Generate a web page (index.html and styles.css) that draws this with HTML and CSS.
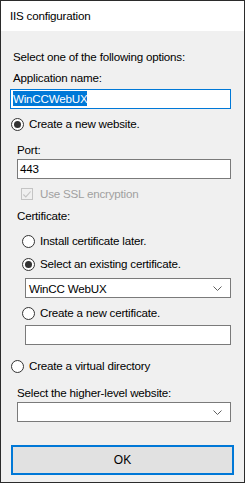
FILE: index.html
```html
<!DOCTYPE html>
<html lang="en">
<head>
    <meta charset="UTF-8">
    <title>IIS configuration</title>
    <link rel="stylesheet" href="styles.css">
</head>
<body>
    <div class="window">
        <div class="titlebar">IIS configuration</div>

        <div class="content">
            <div class="label intro">Select one of the following options:</div>
            <div class="label app-label">Application name:</div>
            <div class="textbox focused app-input"><span class="selected-text">WinCCWebUX</span></div>

            <div class="option new-site">
                <span class="radio checked"></span>
                <span>Create a new website.</span>
            </div>

            <div class="group site-group">
                <div class="label port-label">Port:</div>
                <div class="textbox port-input">443</div>

                <div class="option disabled ssl">
                    <span class="checkbox">
                        <svg width="11" height="11" viewBox="0 0 11 11"><path d="M1.5 5.5 L4.2 8.2 L9.5 2.2" fill="none" stroke="#c4c4c4" stroke-width="1.2"/></svg>
                    </span>
                    <span>Use SSL encryption</span>
                </div>

                <div class="label cert-label">Certificate:</div>

                <div class="cert-group">
                    <div class="option cert-later">
                        <span class="radio"></span>
                        <span>Install certificate later.</span>
                    </div>
                    <div class="option cert-existing">
                        <span class="radio checked"></span>
                        <span>Select an existing certificate.</span>
                    </div>
                    <div class="combo cert-combo">
                        <span>WinCC WebUX</span>
                        <svg class="chevron" width="9" height="5" viewBox="0 0 9 5"><path d="M0.5 0.5 L4.5 4.5 L8.5 0.5" fill="none" stroke="#606060" stroke-width="1"/></svg>
                    </div>
                    <div class="option cert-new">
                        <span class="radio"></span>
                        <span>Create a new certificate.</span>
                    </div>
                    <div class="textbox cert-input"></div>
                </div>
            </div>

            <div class="option virtual-dir">
                <span class="radio"></span>
                <span>Create a virtual directory</span>
            </div>

            <div class="group">
                <div class="label parent-label">Select the higher-level website:</div>
                <div class="combo parent-combo">
                    <span></span>
                    <svg class="chevron" width="9" height="5" viewBox="0 0 9 5"><path d="M0.5 0.5 L4.5 4.5 L8.5 0.5" fill="none" stroke="#606060" stroke-width="1"/></svg>
                </div>
            </div>
        </div>

        <div class="footer">
            <button class="ok">OK</button>
        </div>
    </div>
</body>
</html>
```

FILE: styles.css
```css
body {
    margin: 0;
    font-family: "Liberation Sans", Arial, sans-serif;
    font-size: 11.6px;
    letter-spacing: -0.2px;
    color: #000;
    background: #f0f0f0;
}
.window {
    width: 245px;
    height: 483px;
    box-sizing: border-box;
    border: 1px solid #2b2b2b;
    background: #f0f0f0;
    display: flex;
    flex-direction: column;
}
.titlebar {
    height: 30px;
    line-height: 30px;
    padding-left: 9px;
    background: #fff;
}
.content {
    display: flex;
    flex-direction: column;
    padding: 0 13px 0 9px;
}
.label {
    line-height: 16px;
    height: 16px;
    padding-left: 3px;
}
.intro { margin-top: 18px; }
.app-label { margin-top: 5px; }
.textbox {
    height: 20px;
    box-sizing: border-box;
    border: 1px solid #7a7a7a;
    background: #fff;
    line-height: 18px;
    padding-left: 2px;
}
.textbox.focused {
    border-color: #0078d7;
}
.app-input { margin-top: 3px; }
.selected-text {
    background: #0078d7;
    color: #fff;
    padding: 1px 0;
}
.option {
    display: flex;
    align-items: center;
    gap: 5px;
    height: 16px;
    line-height: 16px;
    padding-left: 1px;
}
.option.disabled {
    color: #a0a0a0;
}
.radio {
    width: 13px;
    height: 13px;
    box-sizing: border-box;
    border: 1px solid #333;
    border-radius: 50%;
    background: #fff;
    display: flex;
    align-items: center;
    justify-content: center;
    flex-shrink: 0;
}
.radio.checked::after {
    content: "";
    width: 7px;
    height: 7px;
    border-radius: 50%;
    background: #333;
}
.checkbox {
    width: 12px;
    height: 12px;
    box-sizing: border-box;
    border: 1px solid #c4c4c4;
    background: #f0f0f0;
    display: flex;
    align-items: center;
    justify-content: center;
    margin-right: 2px;
}
.new-site { margin-top: 7px; }
.group {
    display: flex;
    flex-direction: column;
    padding-left: 7px;
}
.group .label { padding-left: 0; }
.port-label { margin-top: 10px; }
.port-input { margin-top: 1px; }
.ssl { margin-top: 7px; padding-left: 4px; }
.cert-label { margin-top: 6px; }
.cert-group {
    display: flex;
    flex-direction: column;
    padding-left: 4px;
}
.cert-later { margin-top: 9px; }
.cert-existing { margin-top: 7px; }
.combo {
    height: 20px;
    box-sizing: border-box;
    border: 1px solid #7a7a7a;
    background: #fff;
    display: flex;
    align-items: center;
    justify-content: space-between;
    padding: 0 8px 0 3px;
}
.cert-combo { margin-top: 6px; margin-left: 4px; }
.cert-new { margin-top: 7px; }
.cert-input { margin-top: 4px; margin-left: 4px; }
.virtual-dir { margin-top: 13px; }
.parent-label { margin-top: 11px; }
.parent-combo { margin-top: 1px; }
.footer {
    padding: 23px 10px 0 10px;
}
.ok {
    display: block;
    width: 223px;
    height: 30px;
    box-sizing: border-box;
    border: 2px solid #0078d7;
    background: #e1e1e1;
    font-family: inherit;
    font-size: 12px;
    color: #000;
    padding: 0;
}
```
